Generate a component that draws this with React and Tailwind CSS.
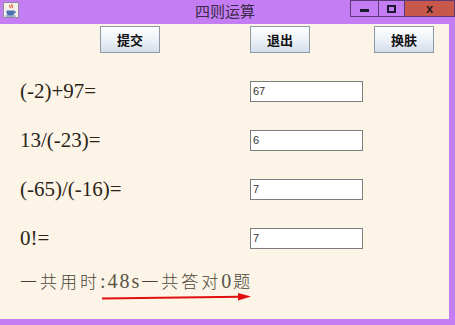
import React from 'react';

const rows = [
  { q: '(-2)+97=', a: '67' },
  { q: '13/(-23)=', a: '6' },
  { q: '(-65)/(-16)=', a: '7' },
  { q: '0!=', a: '7' },
];

const JavaIcon = () => (
  <svg width="16" height="16" viewBox="0 0 16 16">
    <rect x="0.5" y="0.5" width="15" height="15" fill="#f4f1ea" stroke="#8f8aa0" />
    <path d="M7 3c-1 1 1 2 0 3M9 2c-1 1.5 1.5 2.5 0 4" stroke="#e0542a" strokeWidth="1.2" fill="none" />
    <path d="M3.5 8.5h8v2.5c0 1.5-1.5 2.5-4 2.5s-4-1-4-2.5z" fill="#4a6fb0" />
    <path d="M11.5 9.2c1.5 0 1.5 1.8 0 2" stroke="#4a6fb0" strokeWidth="1" fill="none" />
    <path d="M2.5 14h10" stroke="#4a6fb0" strokeWidth="1" />
  </svg>
);

const Btn = ({ children }) => (
  <button className="w-[60px] h-[27px] border border-[#8e9aa8] bg-gradient-to-b from-[#ffffff] via-[#edf2f8] to-[#d3deea] text-[13px] font-bold text-[#111] leading-none">
    {children}
  </button>
);

export default function App() {
  const cjk = { fontFamily: '"Noto Sans CJK SC", sans-serif' };
  const serif = { fontFamily: '"Liberation Serif", serif' };
  return (
    <div className="w-[455px] h-[325px] bg-[#c47df2] flex flex-col overflow-hidden">
      {/* Title bar */}
      <div className="h-[24px] flex items-start relative shrink-0">
        <div className="pl-[3px] pt-[2px]">
          <JavaIcon />
        </div>
        <div
          className="absolute left-[188px] top-[1px] w-[74px] text-center text-[15px] text-[#3a2a48] leading-[20px]"
          style={cjk}
        >
          四则运算
        </div>
        <div className="ml-auto flex h-[17px]">
          <div className="w-[28px] border border-[#5a3a78] border-r-0 flex items-center justify-center">
            <div className="w-[9px] h-[3px] bg-[#1a1a2a] mt-[3px]" />
          </div>
          <div className="w-[27px] border border-[#5a3a78] flex items-center justify-center">
            <div className="w-[9px] h-[8px] border-2 border-[#1a1a2a]" />
          </div>
          <div className="w-[50px] bg-[#c9584c] border border-[#5a3a78] border-l-0 flex items-center justify-center text-[13px] font-bold text-[#2a1a1a] leading-none" style={{ fontFamily: '"Liberation Sans", sans-serif' }}>
            x
          </div>
        </div>
      </div>

      {/* Content */}
      <div className="w-[449px] h-[295px] bg-[#fcf4e6] relative">
        <div className="flex pt-[2px]" style={cjk}>
          <div className="ml-[100px]"><Btn>提交</Btn></div>
          <div className="ml-[90px]"><Btn>退出</Btn></div>
          <div className="ml-[64px]"><Btn>换肤</Btn></div>
        </div>

        <div className="flex flex-col gap-[28px] mt-[28px]">
          {rows.map((r) => (
            <div key={r.q} className="flex items-center h-[21px]">
              <div className="w-[230px] pl-[20px] text-[21px] text-[#2a2418] leading-none" style={serif}>
                {r.q}
              </div>
              <div
                className="ml-[20px] w-[113px] h-[21px] bg-white border border-[#7e7e7e] pl-[2px] text-[11px] text-[#333] leading-[19px]"
                style={{ fontFamily: '"Liberation Sans", sans-serif' }}
              >
                {r.a}
              </div>
            </div>
          ))}
        </div>

        {/* result line */}
        <div
          className="mt-[22px] pl-[20px] h-[20px] flex items-baseline text-[17px] font-light text-[#4a4438] leading-none whitespace-nowrap"
          style={{ fontFamily: '"Noto Sans CJK SC", serif' }}
        >
          <span className="tracking-[3px]">一共用时</span>
          <span className="text-[20px] tracking-[2px] text-[#5a5448]" style={serif}>:48s</span>
          <span className="tracking-[3px]">一共答对</span>
          <span className="text-[20px] tracking-[2px] text-[#5a5448]" style={serif}>0</span>
          <span>题</span>
        </div>

        {/* red arrow */}
        <svg className="absolute left-[100px] top-[268px]" width="154" height="10" viewBox="0 0 154 10">
          <path d="M2 6.5 L140 4.8" stroke="#e01010" strokeWidth="2" fill="none" />
          <path d="M138 1 L151 4.6 L138 8.5 Z" fill="#e01010" />
        </svg>
      </div>
    </div>
  );
}
